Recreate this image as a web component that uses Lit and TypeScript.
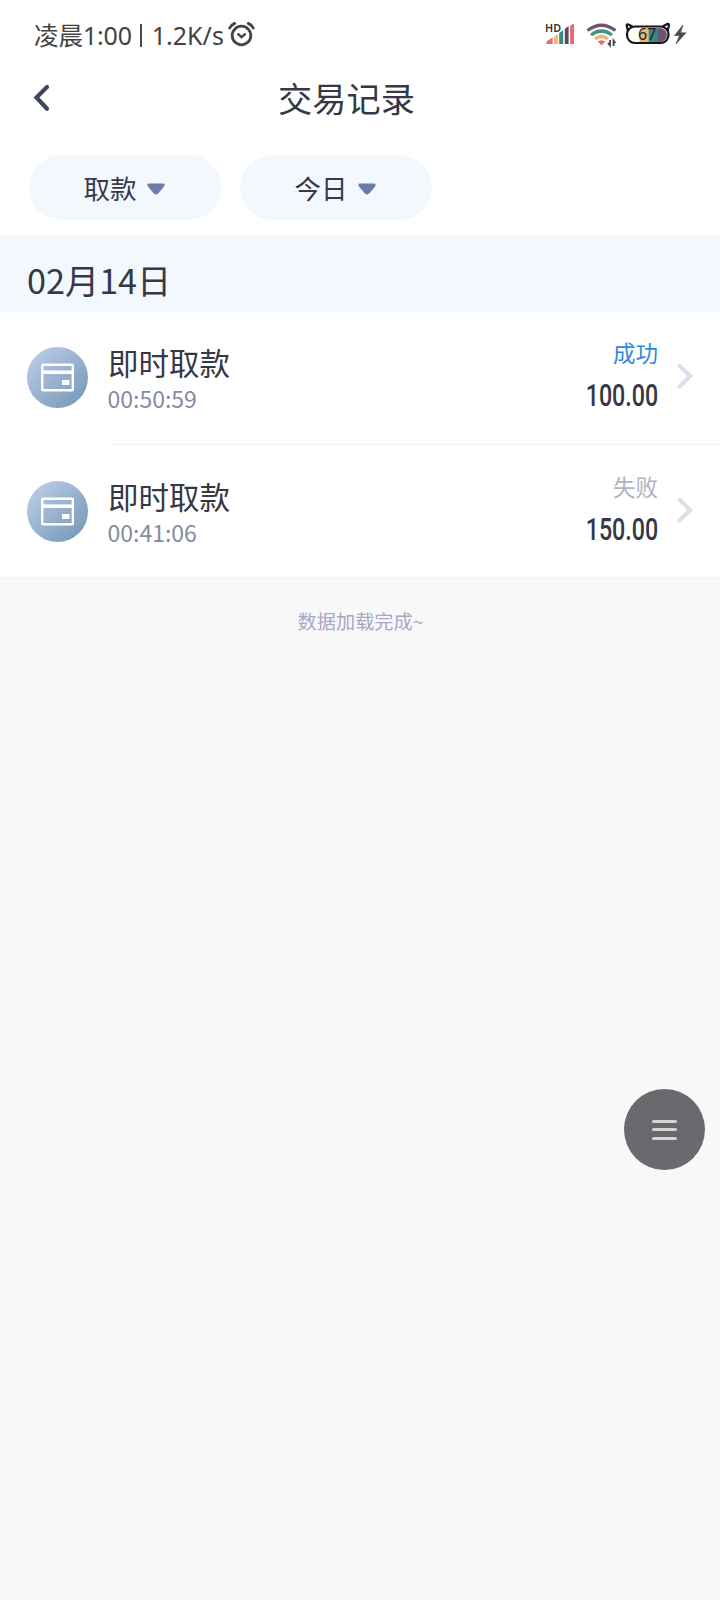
import { LitElement, html, css } from "lit";
import { customElement, property } from "lit/decorators.js";

interface RecordItem {
  title: string;
  time: string;
  status: string;
  ok: boolean;
  amount: string;
}

@customElement("status-bar")
class StatusBar extends LitElement {
  static styles = css`
    :host { display: flex; height: 68px; box-sizing: border-box; padding: 1px 33px 0 34px; align-items: center; color: #424242; font: 25px/36px "Noto Sans", "Noto Sans CJK SC", sans-serif; }
    .cjk { font-family: "Noto Sans CJK SC", sans-serif; font-size: 24.5px; }
    .time { letter-spacing: -0.2px; }
    .bar { margin: 2px 9.5px 0 8.5px; width: 2px; height: 23px; background: #4a4a4a; }
    .alarm { margin: -1px 0 0 4px; }
    .spacer { flex: 1; }
    svg { display: block; flex: none; }
    .icons { margin-top: -1px; }
    .digits { font: 16px "Noto Sans", sans-serif; }
    .hd { font: 600 11px "Noto Sans", sans-serif; }
  `;
  render() {
    return html`
      <span class="cjk">凌晨</span><span class="time">1:00</span>
      <span class="bar"></span><span>1.2K/s</span>
      <svg class="alarm" width="27" height="26" viewBox="0 0 27 26" fill="none" stroke="#444" stroke-width="2.8" stroke-linecap="round">
        <circle cx="13.5" cy="14.5" r="9.3" />
        <path d="M10.2 13.2 L13.5 16.2 L17 13.2" stroke-width="2.4" />
        <path d="M1.7 7 Q3 4 6.7 2.4 M25.3 7 Q24 4 20.3 2.4" />
      </svg>
      <span class="spacer"></span>
      <svg class="icons" width="144" height="32" viewBox="543 18 144 32">
        <path d="M546.5 44 V41.5 L552.6 37.5 V44Z" fill="#e66a70" />
        <path d="M554 44 V37 L557.8 34 V44Z" fill="#f5b56c" />
        <path d="M559.2 44 V33 L563.2 30 V44Z" fill="#3f8583" />
        <path d="M564.8 44 V29 L568.6 26 V44Z" fill="#5c4768" />
        <path d="M570.1 44 V25.5 L574 23.5 V44Z" fill="#e66a70" />
        <text class="hd" x="545" y="32" fill="#333" textLength="16" lengthAdjust="spacingAndGlyphs">HD</text>
        <g fill="none" stroke-width="3.2">
          <path d="M587.5 30.5 Q601.5 20 615.5 30.5" stroke="#6d5474" />
          <path d="M591 35 Q601.5 27 612 35" stroke="#479088" />
          <path d="M595 39 Q601.5 34 608 39" stroke="#f3b56d" />
        </g>
        <path d="M598.3 41.7 Q601.5 39.8 604.7 41.7 L601.5 44.8Z" fill="#e66a70" stroke="#e66a70" />
        <path d="M610 40 V45.5 L608 43 M613.5 46 V40.5 L615.5 43" fill="none" stroke="#444" stroke-width="1.7" />
        <path d="M641 28 H648.5 V42 H639.5Z" fill="#f3b56d" />
        <path d="M648.5 28 H658 V42 H648.5Z" fill="#3f8583" />
        <path d="M658 28 H660 A7 7 0 0 1 660 42 H658Z" fill="#6d5474" />
        <rect x="627" y="26.5" width="41.5" height="16.5" rx="8" fill="none" stroke="#151515" stroke-width="2.2" />
        <path d="M628 31 L626.6 25.2 Q627 23.6 629 24.8 L632.5 26.8 M667.5 31 L669 25.2 Q668.6 23 666.6 24.3 L662.5 26.8" fill="none" stroke="#151515" stroke-width="2.2" />
        <text class="digits" x="638" y="39.6" fill="#222">67</text>
        <path d="M683 25 L674.5 35.5 H679.5 L676 44 L686 32.8 H680.5Z" fill="#4a4a4a" stroke="#4a4a4a" stroke-width="0.6" />
      </svg>
    `;
  }
}

@customElement("filter-pill")
class FilterPill extends LitElement {
  @property() label = "";
  static styles = css`
    :host { display: flex; width: 192px; height: 65px; border-radius: 33px; background: #f3f8ff; align-items: center; justify-content: center; box-sizing: border-box; padding-right: 2px; gap: 10px; color: #363a48; font: 26.5px/38px "Noto Sans CJK SC", sans-serif; }
    svg { display: block; margin-top: 2px; }
  `;
  render() {
    return html`<span>${this.label}</span>
      <svg width="18" height="12" viewBox="0 0 18 12"><path d="M1.5 1.6 H16.5 V2.6 L10.4 9.8 Q9 11 7.6 9.8 L1.5 2.6Z" fill="#6c7bab" stroke="#6c7bab" stroke-width="2" stroke-linejoin="round" /></svg>`;
  }
}

@customElement("record-row")
class RecordRow extends LitElement {
  @property({ attribute: false }) item!: RecordItem;
  @property({ type: Boolean, reflect: true }) last = false;
  static styles = css`
    :host { display: flex; height: 134px; padding-left: 27px; background: #fff; font-family: "Noto Sans CJK SC", sans-serif; color: #363845; }
    :host([last]) { height: 131px; border-bottom: 1px solid #f5f5f6; }
    .icon { display: block; flex: none; margin: 35px 20px 0 0; }
    .body { flex: 1; display: flex; height: 133px; box-sizing: border-box; border-bottom: 1px solid #f3f3f5; padding: 0 26px 0 0; }
    :host([last]) .body { height: 131px; border-bottom: 0; }
    .info { flex: 1; padding-top: 29px; }
    .title { font-size: 30.5px; line-height: 42px; }
    .time { font-size: 23px; line-height: 30px; color: #868ba3; margin-left: -0.5px; }
    .side { padding-top: 22px; text-align: right; }
    .status { font-size: 22.5px; line-height: 36px; color: #b0b2c2; }
    .status.ok { color: #2e8ade; }
    .amount { font: 500 31px/46px Roboto, sans-serif; margin-top: 3px; transform: translateX(0.5px) scaleX(0.75); transform-origin: right; }
    .chev { display: block; flex: none; margin: 51px 0 0 19px; }
  `;
  render() {
    const r = this.item;
    return html`
      <svg class="icon" width="61" height="61" viewBox="0 0 61 61">
        <defs><linearGradient id="g" x1="0.1" y1="0.1" x2="0.85" y2="0.9"><stop offset="0" stop-color="#b9cbe6" /><stop offset="1" stop-color="#7b9bbb" /></linearGradient></defs>
        <circle cx="30.5" cy="30.5" r="30.5" fill="url(#g)" />
        <rect x="15.2" y="17.8" width="30.6" height="25.4" rx="0.8" fill="none" stroke="#fff" stroke-width="2.4" />
        <path d="M15 25.2 H46" stroke="#fff" stroke-width="3.6" />
        <rect x="35" y="33" width="7.5" height="5" fill="#fff" />
      </svg>
      <div class="body">
        <div class="info"><div class="title">${r.title}</div><div class="time">${r.time}</div></div>
        <div class="side"><div class="status ${r.ok ? "ok" : ""}">${r.status}</div><div class="amount">${r.amount}</div></div>
        <svg class="chev" width="17" height="27" viewBox="0 0 17 27" fill="none" stroke="#dcdfe9" stroke-width="4" stroke-linecap="round" stroke-linejoin="miter"><path d="M2.5 2.8 L13.2 13 L2.5 23.6" /></svg>
      </div>
    `;
  }
}

@customElement("app-root")
class AppRoot extends LitElement {
  records: RecordItem[] = [
    { title: "即时取款", time: "00:50:59", status: "成功", ok: true, amount: "100.00" },
    { title: "即时取款", time: "00:41:06", status: "失败", ok: false, amount: "150.00" },
  ];
  static styles = css`
    :host { display: block; height: 1600px; background: #f8f8f8; font-family: "Noto Sans CJK SC", sans-serif; color: #363845; }
    .top { background: #fff; height: 235px; }
    .nav { display: grid; grid-template-columns: 30px 1fr 89px; align-items: center; height: 62px; padding-left: 32px; }
    .nav h1 { margin: -4px 0 0; text-align: center; font-weight: 400; font-size: 34.2px; line-height: 50px; }
    .filters { display: flex; gap: 19px; padding: 25px 0 0 29px; }
    .date { height: 77px; box-sizing: border-box; padding: 18px 0 0 27px; background: #f3f8ff; font-size: 34.2px; line-height: 52px; }
    .done { text-align: center; color: #a5a9c6; font-size: 19.2px; line-height: 30px; padding: 28px 0 0 1px; }
    .fab { position: fixed; left: 624px; top: 1089px; width: 81px; height: 81px; border-radius: 50%; background: #696a6e; display: flex; flex-direction: column; align-items: center; justify-content: center; gap: 5.5px; }
    .fab i { width: 25px; height: 3px; border-radius: 2px; background: #d5d5d6; }
  `;
  render() {
    return html`
      <div class="top">
        <status-bar></status-bar>
        <div class="nav">
          <svg width="20" height="30" viewBox="0 0 20 30" fill="none" stroke="#40465a" stroke-width="4.2" stroke-linecap="round" stroke-linejoin="miter"><path d="M15 3 L4.5 13.5 L15 24.8" /></svg>
          <h1>交易记录</h1>
        </div>
        <div class="filters"><filter-pill label="取款"></filter-pill><filter-pill label="今日"></filter-pill></div>
      </div>
      <div class="date">02月14日</div>
      ${this.records.map((r, i) => html`<record-row .item=${r} ?last=${i === this.records.length - 1}></record-row>`)}
      <div class="done">数据加载完成~</div>
      <div class="fab"><i></i><i></i><i></i></div>
    `;
  }
}
